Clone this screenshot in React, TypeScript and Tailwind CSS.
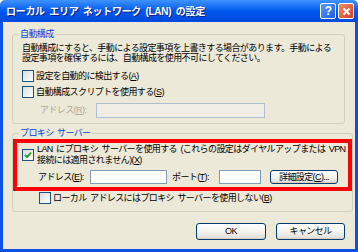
import React from 'react'

function Box({ checked }: { checked?: boolean }) {
  return (
    <span className="w-[12px] h-[12px] shrink-0 border border-[#1C5180] bg-gradient-to-br from-[#DCDCD7] to-white flex items-center justify-center">
      {checked && (
        <svg width="8" height="8" viewBox="0 0 8 8">
          <path d="M1 3.8 L3 6 L7 1.6" stroke="#21A121" strokeWidth="1.9" fill="none" />
        </svg>
      )}
    </span>
  )
}

function Btn({ children, className = '' }: { children: React.ReactNode; className?: string }) {
  return (
    <div
      className={`flex items-center justify-center border border-[#003C74] rounded-[3px] bg-gradient-to-b from-white via-[#F4F4F0] to-[#DEDDD4] shadow-[inset_0_-1px_0_#D6D0C5] ${className}`}
    >
      {children}
    </div>
  )
}

export default function App() {
  return (
    <div className="w-[358px] h-[252px] flex flex-col font-['Liberation_Sans','Noto_Sans_CJK_JP',sans-serif] text-[9px] leading-[11px] tracking-[-0.6px] [word-spacing:1.5px] text-black select-none">
      {/* title bar */}
      <div className="h-[22px] shrink-0 flex items-center pl-[6px] pr-[4px] rounded-t-[5px] bg-gradient-to-b from-[#3E93FF] via-[#0058EE] to-[#0049DC]">
        <span className="text-white font-bold text-[10px] tracking-[-0.3px] [word-spacing:2px] [text-shadow:1px_1px_0_#0A1F88]">
          ローカル エリア ネットワーク (LAN) の設定
        </span>
        <div className="ml-auto flex gap-[2px]">
          <div className="w-[16px] h-[16px] rounded-[2px] border border-white bg-gradient-to-br from-[#5E98FF] to-[#1B5BE6] flex items-center justify-center text-white font-bold text-[12px] leading-none">
            ?
          </div>
          <div className="w-[16px] h-[16px] rounded-[2px] border border-white bg-gradient-to-br from-[#F08A6A] to-[#D5391A] flex items-center justify-center">
            <svg width="9" height="9" viewBox="0 0 9 9">
              <path d="M1.5 1.5 L7.5 7.5 M7.5 1.5 L1.5 7.5" stroke="white" strokeWidth="1.8" />
            </svg>
          </div>
        </div>
      </div>

      {/* body */}
      <div className="flex-1 flex flex-col bg-[#ECE9D8] border-x-[3px] border-b-[3px] border-[#0B4FE3] pl-[9px] pr-[10px] pt-[7px]">
        <fieldset className="border border-[#D0D0BF] rounded-[3px] px-0">
          <legend className="ml-[6px] px-[1px] text-[#0046D5]">自動構成</legend>
          <div className="px-[9px] pt-[3px] pb-[5px] flex flex-col">
            <div className="leading-[10px] whitespace-nowrap">
              自動構成にすると、手動による設定事項を上書きする場合があります。手動による
              <br />
              設定事項を確保するには、自動構成を使用不可にしてください。
            </div>
            <div className="mt-[7px] flex items-center gap-[2px] h-[12px]">
              <Box />
              <span>
                設定を自動的に検出する(<u>A</u>)
              </span>
            </div>
            <div className="mt-[4px] flex items-center gap-[2px] h-[12px]">
              <Box />
              <span>
                自動構成スクリプトを使用する(<u>S</u>)
              </span>
            </div>
            <div className="mt-[5px] flex items-center pl-[18px]">
              <span className="w-[56px] text-[#ACA899]">
                アドレス(<u>R</u>):
              </span>
              <div className="w-[169px] h-[15px] border border-[#AFC0D4] bg-[#EFEDE4]" />
            </div>
          </div>
        </fieldset>

        <fieldset className="mt-[4px] border border-[#D0D0BF] rounded-[3px] px-0">
          <legend className="ml-[6px] px-[1px] text-[#0046D5]">プロキシ サーバー</legend>
          <div className="border-[4px] border-[#FF0000] pl-[5px] pr-[3px] pt-[1px] pb-[3px] flex flex-col">
            <div className="flex items-center gap-[3px]">
              <Box checked />
              <span className="whitespace-nowrap">
                LAN にプロキシ サーバーを使用する (これらの設定はダイヤルアップまたは VPN
                <br />
                接続には適用されません)(<u>X</u>)
              </span>
            </div>
            <div className="mt-[4px] flex items-center pl-[16px]">
              <span className="w-[52px]">
                アドレス(<u>E</u>):
              </span>
              <div className="w-[77px] h-[14px] border border-[#7F9DB9] bg-white" />
              <span className="ml-[5px] w-[47px]">
                ポート(<u>T</u>):
              </span>
              <div className="w-[42px] h-[14px] border border-[#7F9DB9] bg-white" />
              <Btn className="ml-[9px] w-[68px] h-[14px]">
                詳細設定(<u>C</u>)...
              </Btn>
            </div>
          </div>
          <div className="mt-[1px] pb-[7px] pl-[26px] flex items-center gap-[2px] h-[12px] box-content">
            <Box />
            <span>
              ローカル アドレスにはプロキシ サーバーを使用しない(<u>B</u>)
            </span>
          </div>
        </fieldset>

        <div className="mt-[11px] flex justify-end gap-[10px]">
          <Btn className="w-[70px] h-[17px]">OK</Btn>
          <Btn className="w-[69px] h-[17px]">キャンセル</Btn>
        </div>
      </div>
    </div>
  )
}
